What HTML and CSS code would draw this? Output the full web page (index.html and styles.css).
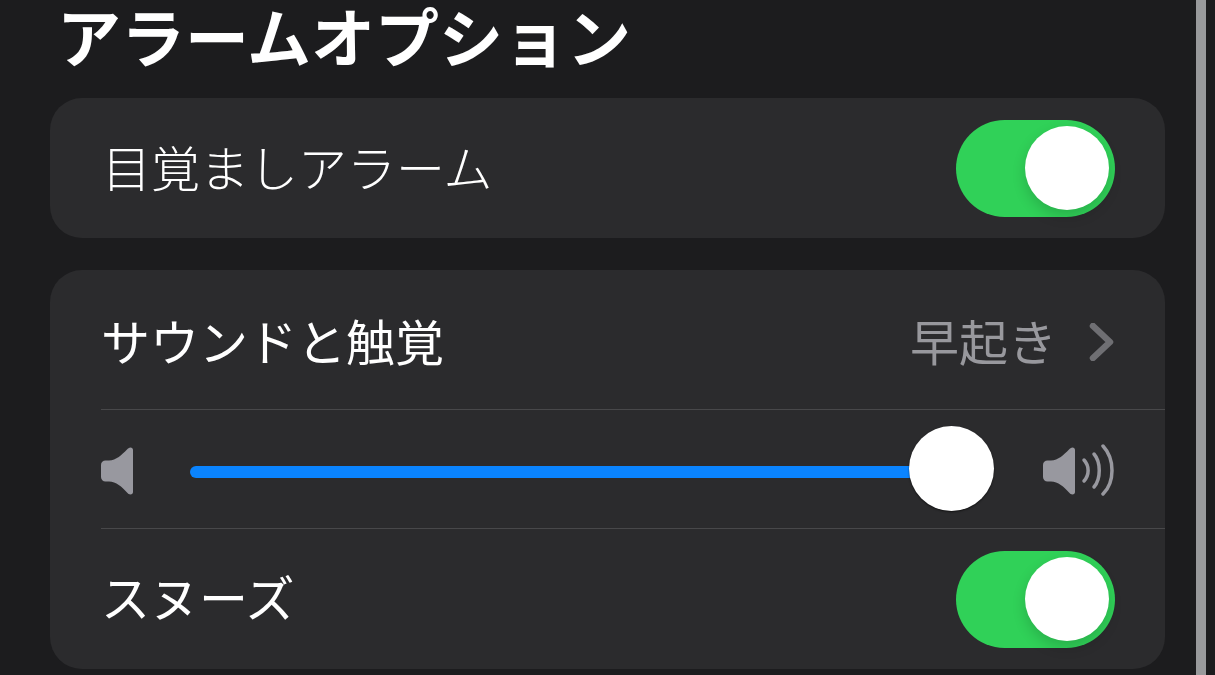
FILE: index.html
```html
<!DOCTYPE html>
<html lang="ja">
<head>
<meta charset="utf-8">
<title>アラームオプション</title>
<link rel="stylesheet" href="styles.css">
</head>
<body>
<div class="page">
  <main class="content">
    <h1 class="title">アラームオプション</h1>
    <section class="card card-single">
      <div class="row row-first">
        <span class="label label-wake">目覚ましアラーム</span>
        <span class="toggle"><span class="knob"></span></span>
      </div>
    </section>
    <section class="card card-multi">
      <div class="row row-sound">
        <span class="label label-sound">サウンドと触覚</span>
        <span class="value">早起き</span>
        <svg class="chevron" width="26" height="38" viewBox="0 0 26 38"><path d="M4 3 L21 19 L4 35" fill="none" stroke="#6f6f73" stroke-width="6.5" stroke-linecap="round" stroke-linejoin="round"/></svg>
      </div>
      <div class="row-volume">
        <svg class="spk-low" width="32" height="48" viewBox="0 0 32 48"><path d="M29.5 0.5 C31 0.5 32 1.5 32 3 V45 C32 46.5 31 47.5 29.5 47.5 C28 47.5 27 46.5 26 45.5 C21 40 15 34.5 8 34.5 H4.5 C2 34.5 0 32.5 0 30 V18 C0 15 2 13.500 4.5 13.5 H8 C15 13.5 21 7.5 26 2.5 C27 1.5 28 0.5 29.5 0.5 Z" fill="#98989f"/></svg>
        <div class="slider">
          <div class="fill"></div>
          <div class="thumb"></div>
        </div>
        <svg class="spk-high" width="72" height="52" viewBox="0 0 72 52"><path d="M29.5 3.5 C31 3.5 32 4.5 32 6 V48 C32 49.5 31 50.5 29.5 50.5 C28 50.5 27 49.5 26 48.5 C21 43 15 37.5 8 37.5 H4.5 C2 37.5 0 35.5 0 33 V21 C0 18 2 16.5 4.5 16.5 H8 C15 16.5 21 10.5 26 5.5 C27 4.5 28 3.5 29.5 3.5 Z" fill="#98989f"/><g fill="none" stroke="#98989f" stroke-width="3.5" stroke-linecap="round"><path d="M41 16 C46.500 22 46.500 31 41 37"/><path d="M51 10 C58 18 58 35 51 43"/><path d="M60 2 C72 15 72 38 60 50"/></g></svg>
      </div>
      <div class="row row-snooze">
        <span class="label label-snooze">スヌーズ</span>
        <span class="toggle"><span class="knob"></span></span>
      </div>
    </section>
  </main>
  <div class="scrollbar"></div>
</div>
</body>
</html>
```
FILE: styles.css
```css
* { box-sizing: border-box; }
html, body { margin: 0; padding: 0; height: 675px; overflow: hidden; background: #1c1c1e; }
body { font-family: "Noto Sans CJK JP", "Noto Sans", sans-serif; color: #fff; }
.page { display: flex; height: 675px; }
.content { width: 1115px; margin-left: 50px; flex: none; display: flex; flex-direction: column; }
.scrollbar { width: 10px; margin-left: 31px; background: #999a9c; flex: none; }
.title { margin: 0; height: 98px; padding-left: 7px; font-size: 64px; font-weight: 700; line-height: 68px; white-space: nowrap; }
.card { background: #2b2b2d; border-radius: 32px; flex: none; }
.card-single { height: 140px; margin-bottom: 32px; }
.card-multi { height: 399px; padding-left: 51px; }
.row { display: flex; align-items: center; }
.row-first { height: 140px; padding: 0 50px 0 52px; justify-content: space-between; }
.label { font-size: 49px; line-height: 60px; white-space: nowrap; }
.label-wake { font-weight: 300; margin-top: -4px; }
.label-sound { font-weight: 400; }
.label-snooze { font-weight: 400; margin-top: -6px; }
.row-sound { height: 140px; padding: 0 50px 0 0; border-bottom: 1px solid #48484a; }
.value { margin-left: auto; font-size: 49px; font-weight: 400; line-height: 60px; color: #98989d; }
.chevron { margin-left: 32px; flex: none; margin-top: 4px; }
.row-volume { height: 119px; display: flex; align-items: center; padding: 6px 50px 0 0; border-bottom: 1px solid #48484a; }
.spk-low { flex: none; margin-top: -2px; }
.slider { position: relative; width: 804px; height: 12px; margin-left: 57px; flex: none; }
.fill { height: 12px; width: 760px; background: #0a84ff; border-radius: 6px; }
.thumb { position: absolute; left: 719px; top: -40px; width: 85px; height: 85px; border-radius: 50%; background: #fff; box-shadow: 0 1px 2px rgba(0,0,0,.6); }
.spk-high { flex: none; margin-left: 49px; margin-top: -4px; }
.row-snooze { height: 140px; padding: 0 50px 0 0; justify-content: space-between; }
.toggle { position: relative; display: block; width: 159px; height: 97px; border-radius: 49px; background: #30d158; flex: none; }
.knob { position: absolute; left: 69px; top: 6.5px; width: 84px; height: 84px; border-radius: 50%; background: #fff; box-shadow: 0 6px 14px rgba(0,0,0,.16); }
```
